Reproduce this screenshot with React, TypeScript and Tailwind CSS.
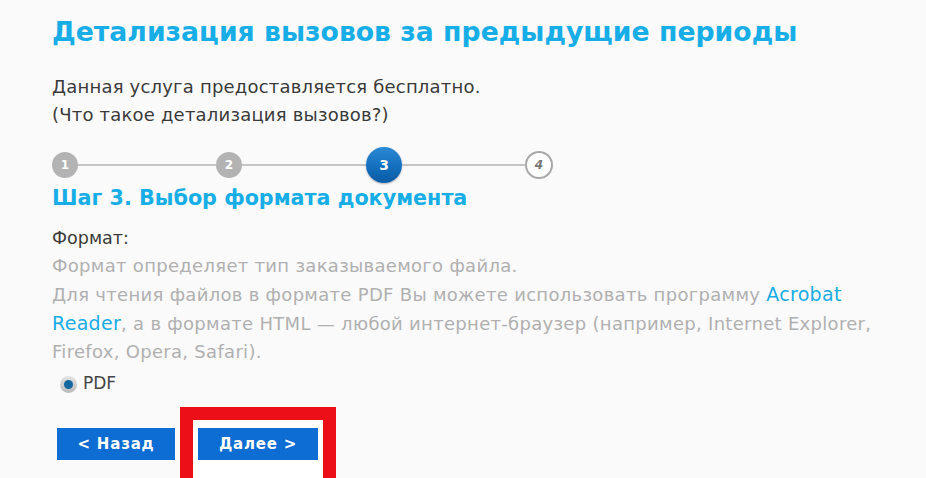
export default function App() {
  const font = { fontFamily: '"DejaVu Sans", Verdana, sans-serif' }

  return (
    <div className="w-[926px] h-[478px] overflow-hidden bg-[#fafafb]" style={font}>
      <div className="pl-[52px] pt-[14px] flex flex-col">
        {/* Title */}
        <h1 className="text-[26.7px] leading-[36px] font-bold text-[#17ade6] whitespace-nowrap">
          Детализация вызовов за предыдущие периоды
        </h1>

        <p className="mt-[23px] text-[18px] leading-[28px] tracking-[0.2px] text-[#3a3a3a]">
          Данная услуга предоставляется бесплатно.
          <br />
          (Что такое детализация вызовов?)
        </p>

        {/* Steps */}
        <div className="mt-[18px] flex items-center h-[36px]">
          <div className="w-[26px] h-[26px] rounded-full bg-[#b3b3b3] flex items-center justify-center text-white text-[12px] font-bold">
            1
          </div>
          <div className="w-[138px] h-[2px] bg-[#c4c4c4]" />
          <div className="w-[26px] h-[26px] rounded-full bg-[#b3b3b3] flex items-center justify-center text-white text-[12px] font-bold">
            2
          </div>
          <div className="w-[124px] h-[2px] bg-[#c4c4c4]" />
          <div className="w-[36px] h-[36px] rounded-full bg-gradient-to-b from-[#2b8ad4] via-[#1472c0] to-[#0a5aa3] shadow-[0_1px_2px_rgba(0,0,0,0.3)] flex items-center justify-center text-white text-[14px] font-bold">
            3
          </div>
          <div className="w-[123px] h-[2px] bg-[#c4c4c4]" />
          <div className="w-[28px] h-[28px] rounded-full bg-white border-2 border-[#a8a8a8] flex items-center justify-center text-[#777] text-[12px] font-bold italic">
            4
          </div>
        </div>

        <h2 className="mt-[1px] text-[20.7px] leading-[28px] font-bold text-[#17ade6] whitespace-nowrap">
          Шаг 3. Выбор формата документа
        </h2>

        <div className="mt-[12px] text-[17.5px] leading-[28px] text-[#3a3a3a]">Формат:</div>

        <p className="text-[18px] leading-[28px] tracking-[0.3px] text-[#b0b0b0] whitespace-nowrap">
          Формат определяет тип заказываемого файла.
          <br />
          Для чтения файлов в формате PDF Вы можете использовать программу{' '}
          <span className="text-[#17ade6] text-[19px]">Acrobat</span>
          <br />
          <span className="text-[#17ade6] text-[19px]">Reader</span>, а в формате HTML — любой интернет-браузер (например, Internet Explorer,
          <br />
          Firefox, Opera, Safari).
        </p>

        {/* Radio */}
        <div className="mt-[5px] ml-[8px] flex items-center gap-[6px] h-[26px]">
          <div className="w-[17px] h-[17px] rounded-full bg-gradient-to-b from-[#e4e4e4] to-[#b9b9b9] flex items-center justify-center">
            <div className="w-[9px] h-[9px] rounded-full bg-[#13679f]" />
          </div>
          <span className="text-[17px] text-[#444]">PDF</span>
        </div>

        {/* Buttons */}
        <div className="mt-[10px] flex items-end">
          <button className="ml-[5px] mb-[18px] w-[118px] h-[32px] bg-[#0d6dd2] text-white text-[15px] font-bold tracking-[0.8px]">
            &lt; Назад
          </button>
          <div className="ml-[5px] border-[13px] border-b-0 border-[#ec0f17] bg-white px-[5px] pt-[8px] pb-[18px]">
            <button className="w-[120px] h-[32px] bg-[#0d6dd2] text-white text-[15px] font-bold tracking-[0.8px]">
              Далее &gt;
            </button>
          </div>
        </div>
      </div>
    </div>
  )
}
